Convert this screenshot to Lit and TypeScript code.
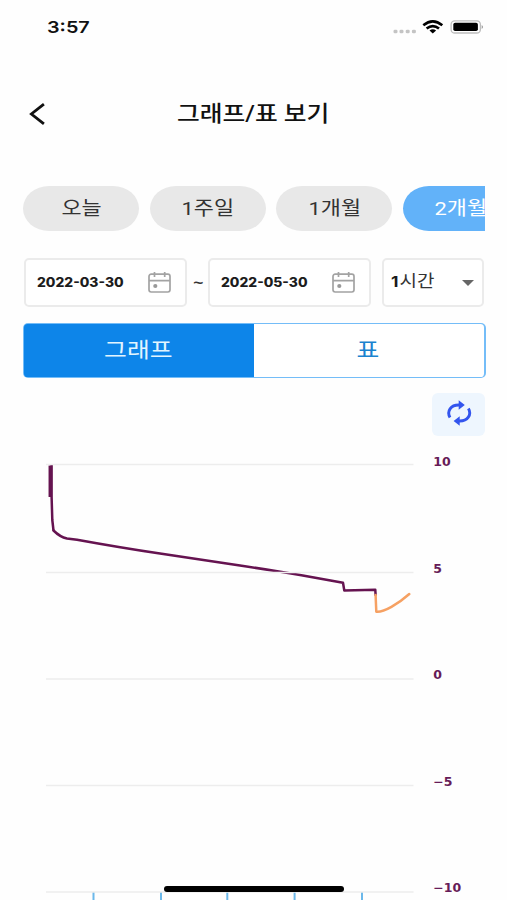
import { LitElement, html, css, svg } from "lit";
import { customElement, state } from "lit/decorators.js";
import { classMap } from "lit/directives/class-map.js";

const RANGES = ["오늘", "1주일", "1개월", "2개월"];
const GRID = [
  { y: 464.5, label: "10", base: 466 },
  { y: 572.5, label: "5", base: 572.7 },
  { y: 679, label: "0", base: 679.3 },
  { y: 785.5, label: "−5", base: 785.8 },
  { y: 892, label: "−10", base: 892.2 },
];
const TICKS = [93.5, 161, 227.3, 294.6, 362];

@customElement("date-field")
class DateField extends LitElement {
  static properties = { value: {} };
  declare value: string;
  static styles = css`
    :host {
      box-sizing: border-box;
      display: flex;
      align-items: center;
      justify-content: space-between;
      width: 163px;
      height: 49px;
      padding: 0 14px 0 11px;
      border: 2px solid #ebebeb;
      border-radius: 5px;
      background: #fff;
    }
    .value {
      font: 800 12.5px/16px Inter, sans-serif;
      color: #1c1c1c;
      transform: scaleX(1.11);
      transform-origin: left;
      white-space: nowrap;
    }
    svg { display: block; }
  `;
  render() {
    return html`<span class="value">${this.value}</span>
      <svg width="23" height="22" viewBox="0 0 23 22" fill="none" stroke="#a3a3a3" stroke-width="1.7">
        <rect x="1" y="2.2" width="21" height="17.8" rx="2.2" />
        <path d="M1 8.6H22M6.5 0v5M16.7 0v5" />
        <circle cx="7.3" cy="14" r="2.1" fill="#999" stroke="none" />
      </svg>`;
  }
}

@customElement("trend-chart")
class TrendChart extends LitElement {
  static styles = css`
    :host { display: block; height: 464px; overflow: hidden; }
    svg { display: block; }
    .grid { stroke: #ededed; stroke-width: 1.6; }
    .tick { stroke: #6bb8ea; stroke-width: 2; }
    .label { font: 700 11.4px "DejaVu Sans", sans-serif; fill: #671c58; }
    .line { fill: none; stroke-width: 2.5; stroke-linejoin: round; stroke-linecap: round; }
    .past { stroke: #651350; }
    .next { stroke: #f6a163; }
    .start { stroke-linecap: butt; }
  `;
  render() {
    return html`<svg width="507" height="464" viewBox="0 436 507 464">
      ${TICKS.map((x) => svg`<line class="tick" x1=${x} x2=${x} y1="892" y2="900" />`)}
      <path class="line past start" d="M49.8 497V465.5M51.6 465V497L52.3 520L53.5 530.5" />
      <path class="line past" d="M53.5 530.5Q60 537 67 538.5L77 539.7Q120 547.5 160 553.5T240 565.5T300 575L343 582.7L344.3 590.5L375.3 589.7L375.6 595" />
      <path class="line next" d="M375.6 595L376.3 611.7C384 612.5 398 604 409.3 594" />
      ${GRID.map((g) => svg`<line class="grid" x1="46" x2="413.5" y1=${g.y} y2=${g.y} />
        <text class="label" transform="translate(433.2 ${g.base}) scale(1.1 1)">${g.label}</text>`)}
    </svg>`;
  }
}

@customElement("app-root")
class AppRoot extends LitElement {
  @state() range = 3;
  @state() tab = 0;

  static styles = css`
    :host {
      display: block;
      position: relative;
      height: 900px;
      overflow: hidden;
      background: #fefefe;
      font-family: Roboto, "Noto Sans CJK KR", sans-serif;
    }
    .wide { display: inline-block; white-space: nowrap; transform: scaleX(1.15); }
    .status {
      display: flex;
      align-items: center;
      justify-content: space-between;
      height: 54px;
      padding: 0 23px 0 47px;
    }
    .time {
      font: 600 16.5px/20px Inter, sans-serif;
      color: #111;
      transform: scaleX(1.2);
      transform-origin: left;
    }
    .header {
      display: grid;
      grid-template-columns: 48px 1fr 48px;
      align-items: center;
      height: 120px;
    }
    .header svg { display: block; margin-left: 28px; }
    h1 {
      margin: 0;
      text-align: center;
      font-size: 21.5px;
      line-height: 30px;
      font-weight: 500;
      color: #111;
    }
    .ranges {
      display: flex;
      gap: 10.7px;
      margin: 12px 22px 0 23px;
      overflow: hidden;
    }
    .pill {
      flex: none;
      display: flex;
      justify-content: center;
      align-items: center;
      width: 116px;
      height: 45px;
      border-radius: 26px / 22.5px;
      background: #e8e8e8;
      color: #333;
      font-size: 19px;
      line-height: 28px;
    }
    .pill.on { background: #62b2f9; color: #fff; }
    .filters {
      display: flex;
      align-items: center;
      height: 49px;
      margin: 27px 0 0 24px;
    }
    .tilde {
      width: 21px;
      padding-left: 2px;
      box-sizing: border-box;
      text-align: center;
      font: 700 15px/16px "Liberation Sans", sans-serif;
      color: #333;
    }
    .select {
      box-sizing: border-box;
      display: flex;
      align-items: center;
      justify-content: space-between;
      width: 102px;
      height: 49px;
      margin-left: 11px;
      padding: 0 8px 0 7px;
      border: 2px solid #ebebeb;
      border-radius: 5px;
      background: #fff;
      font-size: 16.5px;
      line-height: 24px;
      color: #333;
    }
    .select .wide { transform: translateY(-1px) scaleX(1.15); transform-origin: left; }
    .select b { font: 700 15px Inter, sans-serif; color: #1a1a1a; margin-right: 1px; }
    .tabs {
      box-sizing: border-box;
      display: flex;
      width: 463px;
      height: 55px;
      margin: 16px 0 0 22.5px;
      padding: 1.4px;
      border-radius: 5px;
      background: #74bdf8;
    }
    .tab {
      flex: 1;
      display: flex;
      align-items: center;
      justify-content: center;
      font-size: 21px;
      line-height: 28px;
      color: #1b83cf;
      background: #fff;
      border-radius: 0 3.6px 3.6px 0;
    }
    .tab .wide { transform: translate(-0.7px, -1px) scaleX(1.18); }
    .tab.on { background: #0d85e9; color: #e2f5ff; border-radius: 3.6px 0 0 3.6px; }
    .tools { display: flex; justify-content: flex-end; padding: 15px 22px 0; }
    .refresh {
      display: flex;
      align-items: center;
      justify-content: center;
      width: 53px;
      height: 43px;
      border-radius: 6px;
      background: #eef6fe;
    }
    .refresh svg { margin-top: -3px; }
    .home {
      position: absolute;
      left: 164px;
      bottom: 8.5px;
      width: 180px;
      height: 5.5px;
      border-radius: 3px;
      background: #000;
    }
  `;

  render() {
    return html`
      <div class="status">
        <span class="time">3:57</span>
        <svg width="92" height="20" viewBox="0 0 92 20">
          <g fill="#c4c4c4">
            ${[2, 8, 14.2, 20.4].map((x) => svg`<rect x=${x - 0.5} y="12.7" width="4" height="3.6" rx="1.4" />`)}
          </g>
          <g fill="none" stroke="#000" stroke-width="2.6">
            <path d="M31.3 8.3Q40.8 0.4 50.3 8.3" />
            <path d="M34.6 11.6Q40.8 6.5 47 11.6" />
          </g>
          <path d="M37.5 13.6Q40.8 11 44.1 13.6L40.8 16.4Z" />
          <rect x="59.1" y="3.8" width="29.3" height="12.2" rx="3.6" fill="#fff" stroke="#bdbdbd" stroke-width="1.3" />
          <rect x="61.3" y="5.7" width="24.6" height="8.4" rx="1.8" />
          <path d="M89.7 8.1q2.6 1.9 0 3.8z" fill="#999" />
        </svg>
      </div>
      <div class="header">
        <svg width="18" height="22" viewBox="0 0 18 22" fill="none" stroke="#111" stroke-width="2.8">
          <path d="M15.9 1.2L3.4 11L15.9 20.8" />
        </svg>
        <h1><span class="wide">그래프/표 보기</span></h1>
      </div>
      <div class="ranges">
        ${RANGES.map((r, i) => html`<div
          class=${classMap({ pill: true, on: i === this.range })}
          @click=${() => (this.range = i)}
        ><span class="wide">${r}</span></div>`)}
      </div>
      <div class="filters">
        <date-field value="2022-03-30"></date-field>
        <span class="tilde"><span class="wide">~</span></span>
        <date-field value="2022-05-30"></date-field>
        <div class="select">
          <span class="wide"><b>1</b>시간</span>
          <svg width="12" height="6" viewBox="0 0 12 6"><path d="M0 0H12L6 6Z" fill="#666" /></svg>
        </div>
      </div>
      <div class="tabs">
        ${["그래프", "표"].map((t, i) => html`<div
          class=${classMap({ tab: true, on: i === this.tab })}
          @click=${() => (this.tab = i)}
        ><span class="wide">${t}</span></div>`)}
      </div>
      <div class="tools">
        <div class="refresh">
          <svg width="26" height="28" viewBox="0 0 26 28">
            <g fill="none" stroke="#3355ee" stroke-width="2.9">
              <path d="M4 18.4C0.5 12.5 4.5 5.6 13.5 6" />
              <path d="M22.4 9.6C25.9 15.5 21.9 22.4 12.9 22" />
            </g>
            <path d="M12.7 1.3L18.8 6L12.7 10.7ZM13.7 17.3L7.6 22L13.7 26.7Z" fill="#3355ee" />
          </svg>
        </div>
      </div>
      <trend-chart></trend-chart>
      <div class="home"></div>
    `;
  }
}
